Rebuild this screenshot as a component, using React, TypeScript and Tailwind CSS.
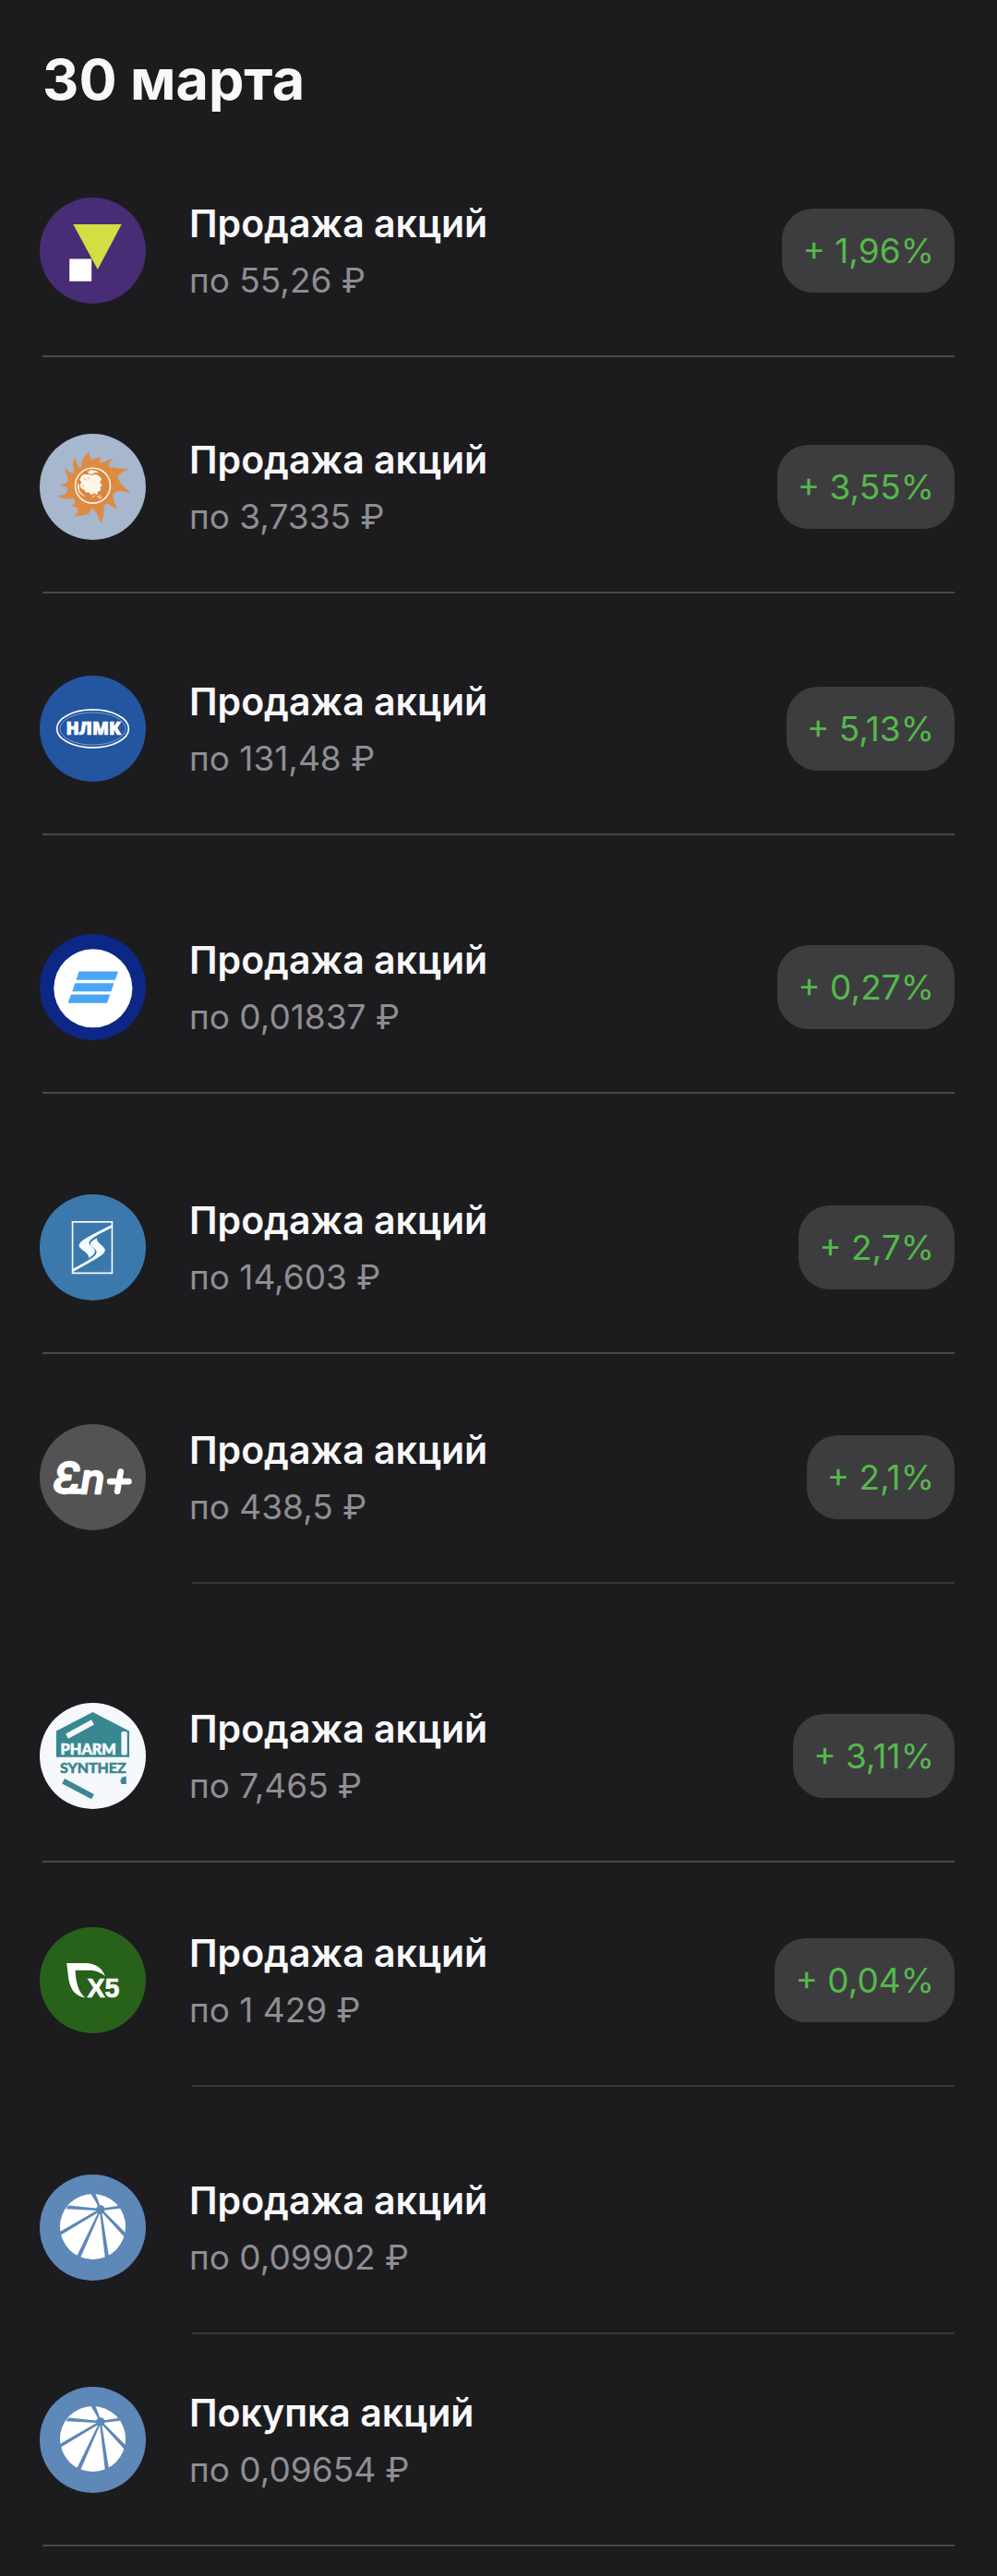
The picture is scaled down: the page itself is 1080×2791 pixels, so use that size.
import type { ReactNode } from "react";
import { clsx } from "clsx";

/** Single operation in the history list. */
interface Operation {
  id: number;
  title: string;
  price: string;
  /** Profit in percent, absent when nothing was earned */
  profit?: string;
  logo: ReactNode;
  /** Space above the row */
  spacing: string;
  /** Divider starts under the text instead of under the logo */
  insetDivider?: boolean;
}

interface LogoProps {
  label: string;
  color: string;
  viewBox: string;
  children: ReactNode;
}

/**
 * Round company logo.
 */
function Logo({ label, color, viewBox, children }: LogoProps) {
  return (
    <svg
      role="img"
      aria-label={label}
      viewBox={viewBox}
      className="size-[115px] shrink-0 rounded-full"
      style={{ backgroundColor: color }}
    >
      {children}
    </svg>
  );
}

function TriangleLogo() {
  return (
    <Logo label="ТГК" color="#482c75" viewBox="39 41 346 346">
      <path d="M148 128H306L228 276Z" fill="#d2de43" />
      <path d="M136 241H208V314H136Z" fill="#fff" />
    </Logo>
  );
}

function SunLogo() {
  return (
    <Logo label="Мосэнерго" color="#a7b7ce" viewBox="39 45 346 346">
      <path
        d="M203 102C197 116 202 124 211 131C220 124 229 120 238 121C234 127 234 133 237 138C248 139 263 132 279 124C271 133 264 141 264 151C269 156 275 157 281 154C296 157 310 159 329 160C315 166 303 172 297 180C293 187 294 194 303 205C313 217 324 227 336 237C320 236 309 230 298 231C287 234 279 239 278 249C279 264 286 276 292 292C279 287 269 275 259 273C250 274 247 281 248 291C248 308 245 319 241 334C229 328 231 315 226 307C221 300 216 293 211 287C205 290 204 297 199 304C187 313 170 311 151 315C160 307 164 299 163 289C158 281 151 282 142 281C151 274 156 268 153 259C147 254 140 256 131 257C116 259 105 253 92 245C106 247 118 245 126 238C132 230 131 221 125 218C118 217 113 215 106 214C117 210 127 207 131 201C134 186 121 174 122 154C128 166 138 175 148 172C153 166 148 157 148 148C147 139 149 130 154 122C158 136 160 147 169 157C176 155 175 146 176 139C181 123 190 112 203 102Z"
        fill="#dd8b43"
      />
      <circle cx="212" cy="214" r="57" fill="#d88640" stroke="#fff0dc" strokeWidth="5" />
      <path
        d="M176 181C188 173 203 182 215 179C224 174 236 183 241 193L235 204L243 213L236 218L238 229L229 234L226 244L216 238L206 245L201 236L190 237L184 228L174 223L170 211L175 204L169 195Z"
        fill="#fff6e8"
      />
      <path d="M195 169L207 163L222 165L233 172L218 171L211 177L200 175Z" fill="#fff0dc" />
      <path d="M163 202L169 217L168 228L176 240L188 249L180 247L167 237L162 222Z" fill="#fff0dc" />
      <path
        d="M184 190L190 196M199 187L196 192M179 212L183 217"
        stroke="#d88640"
        strokeWidth="3"
        fill="none"
      />
      <path d="M217 245L213 253M226 251L238 247M231 256L241 252" stroke="#fff0dc" strokeWidth="3" />
    </Logo>
  );
}

function NlmkLogo() {
  return (
    <Logo label="НЛМК" color="#2455a0" viewBox="39 36 346 346">
      <ellipse cx="212" cy="209" rx="117" ry="62" fill="none" stroke="#fff" strokeWidth="5" />
      <ellipse cx="212" cy="209" rx="107" ry="53" fill="none" stroke="#a9c4ea" strokeWidth="2" />
      <text
        x="214"
        y="230"
        textAnchor="middle"
        fill="#fff"
        stroke="#fff"
        strokeWidth="2"
        className="font-['Open_Sans',sans-serif] text-[56px] font-extrabold"
      >
        НЛМК
      </text>
    </Logo>
  );
}

function StripesLogo() {
  return (
    <Logo label="ВТБ" color="#0c2785" viewBox="39 36 346 346">
      <circle cx="213" cy="213" r="128" fill="#fff" />
      <path
        d="M167 158H295L285 186H158ZM154 196H281L272 223H145ZM141 233H268L259 261H131Z"
        fill="#4ba5f5"
      />
    </Logo>
  );
}

function RibbonLogo() {
  return (
    <Logo label="Сургутнефтегаз" color="#3b79ad" viewBox="39 41 346 346">
      <path d="M146 131H275V298H146Z" fill="none" stroke="#f3faff" strokeWidth="5" />
      <path
        d="M274 140V149C253 160 233 169 216 181C205 189 196 196 202 205C209 213 219 219 219 227C218 237 207 243 200 249C198 245 199 242 196 238C188 226 169 220 167 209C168 197 180 190 191 183C218 167 246 154 274 140Z"
        fill="#f6fbff"
      />
      <path
        d="M147 294V284C171 271 191 260 211 247C221 240 228 232 222 223C215 215 203 210 204 201C206 194 218 189 225 183C226 189 226 192 230 197C237 206 252 214 252 223C250 235 237 242 225 250C198 266 172 279 147 294Z"
        fill="#f6fbff"
      />
    </Logo>
  );
}

function EnPlusLogo() {
  return (
    <Logo label="Эн+" color="#535353" viewBox="39 38 346 346">
      <text
        y="263"
        fill="#fff"
        stroke="#fff"
        strokeWidth="7"
        strokeLinejoin="round"
        className="font-['Inter',sans-serif] font-medium italic"
      >
        <tspan x="82" className="text-[142px]">Ɛ</tspan>
        <tspan x="172" className="text-[130px]">n</tspan>
      </text>
      <path d="M142 257H178" stroke="#fff" strokeWidth="18" strokeLinecap="round" />
      <path d="M303 193L292 257M268 225H329" stroke="#fff" strokeWidth="20" strokeLinecap="round" />
    </Logo>
  );
}

function PharmLogo() {
  return (
    <Logo label="Pharmsynthez" color="#f6f9fc" viewBox="39 39 346 346">
      <path d="M212 69L331 131V216H93V131Z" fill="#398791" />
      <path d="M128 148L212 102" stroke="#f6f9fc" strokeWidth="18" />
      <rect x="305" y="132" width="19" height="77" rx="5" fill="#f6f9fc" />
      <path d="M116 294L212 345" stroke="#398791" strokeWidth="18" />
      <path d="M306 282L321 278V304H305L302 293Z" fill="#398791" />
      <text
        x="107"
        y="208"
        fill="#f6f9fc"
        stroke="#f6f9fc"
        strokeWidth="2"
        className="font-['Lato',sans-serif] text-[49px] font-black"
      >
        PHARM
      </text>
      <text
        x="105"
        y="269"
        fill="#398791"
        stroke="#398791"
        strokeWidth="2"
        className="font-['Lato',sans-serif] text-[48px] font-bold"
      >
        SYNTHEZ
      </text>
    </Logo>
  );
}

function LeafLogo() {
  return (
    <Logo label="X5" color="#28611a" viewBox="39 39 346 346">
      <path
        d="M127 156H193C225 158 244 175 253 200C238 187 222 180 202 180H155C157 218 164 249 187 269C153 263 139 242 133 207Z"
        fill="#fff"
      />
      <text
        x="194"
        y="269"
        fill="#fff"
        stroke="#fff"
        strokeWidth="2"
        className="font-['Liberation_Sans',sans-serif] text-[86px] font-bold"
      >
        X5
      </text>
    </Logo>
  );
}

function UmbrellaLogo() {
  return (
    <Logo label="ТГК-1" color="#5d88b7" viewBox="39 38 346 346">
      <circle cx="212" cy="208" r="107" fill="#fff" />
      <path
        d="M235 150L203 96H219L240 150ZM237 149V156L124 150L133 139ZM235 149L308 138V148L237 156ZM234 150L239 156L102 239V226ZM234 152H240L171 312L158 308ZM234 152H240L265 307L252 310ZM235 154L240 149L323 232L315 242Z"
        fill="#5d88b7"
      />
      <circle cx="237" cy="152" r="14" fill="#5d88b7" />
    </Logo>
  );
}

const operations: Operation[] = [
  { id: 1, title: "Продажа акций", price: "по 55,26 ₽", profit: "+ 1,96%", logo: <TriangleLogo />, spacing: "pt-[88px]" },
  { id: 2, title: "Продажа акций", price: "по 3,7335 ₽", profit: "+ 3,55%", logo: <SunLogo />, spacing: "pt-[83px]" },
  { id: 3, title: "Продажа акций", price: "по 131,48 ₽", profit: "+ 5,13%", logo: <NlmkLogo />, spacing: "pt-[89px]" },
  { id: 4, title: "Продажа акций", price: "по 0,01837 ₽", profit: "+ 0,27%", logo: <StripesLogo />, spacing: "pt-[107px]" },
  { id: 5, title: "Продажа акций", price: "по 14,603 ₽", profit: "+ 2,7%", logo: <RibbonLogo />, spacing: "pt-[109px]" },
  { id: 6, title: "Продажа акций", price: "по 438,5 ₽", profit: "+ 2,1%", logo: <EnPlusLogo />, spacing: "pt-[76px]", insetDivider: true },
  { id: 7, title: "Продажа акций", price: "по 7,465 ₽", profit: "+ 3,11%", logo: <PharmLogo />, spacing: "pt-[129px]" },
  { id: 8, title: "Продажа акций", price: "по 1 429 ₽", profit: "+ 0,04%", logo: <LeafLogo />, spacing: "pt-[70px]", insetDivider: true },
  { id: 9, title: "Продажа акций", price: "по 0,09902 ₽", logo: <UmbrellaLogo />, spacing: "pt-[95px]", insetDivider: true },
  { id: 10, title: "Покупка акций", price: "по 0,09654 ₽", logo: <UmbrellaLogo />, spacing: "pt-[57px]" },
];

/**
 * Operation row with the divider below it.
 */
function OperationRow({ operation }: { operation: Operation }) {
  const { title, price, profit, logo, spacing, insetDivider } = operation;

  return (
    <li className={spacing}>
      <div className="flex items-center pb-14">
        {logo}
        <div className="-my-2 ml-[47px] min-w-0 grow">
          <h2 className="text-[41px] leading-[64px] font-semibold text-[#f8f8fa]">{title}</h2>
          <p className="text-[37px] leading-[60px] text-[#8e8e93]">{price}</p>
        </div>
        {profit && (
          <span className="shrink-0 rounded-[34px] bg-[#3d3d3f] px-[22px] py-4 text-[37px] leading-[59px] text-[#55b84c]">
            {profit}
          </span>
        )}
      </div>
      <div
        className={clsx(
          "h-[2px]",
          insetDivider ? "ml-[165px] bg-[#38383a]" : "ml-[3px] bg-[#48484a]"
        )}
      />
    </li>
  );
}

export default function App() {
  return (
    <main className="min-h-screen bg-[#1c1c1e] pt-[46px] pr-[46px] pb-8 pl-[43px] font-['Inter',sans-serif]">
      <h1 className="ml-[3px] text-[61px] leading-[80px] font-bold text-[#f8f8fa]">30 марта</h1>
      <ul>
        {operations.map((operation) => (
          <OperationRow key={operation.id} operation={operation} />
        ))}
      </ul>
    </main>
  );
}
